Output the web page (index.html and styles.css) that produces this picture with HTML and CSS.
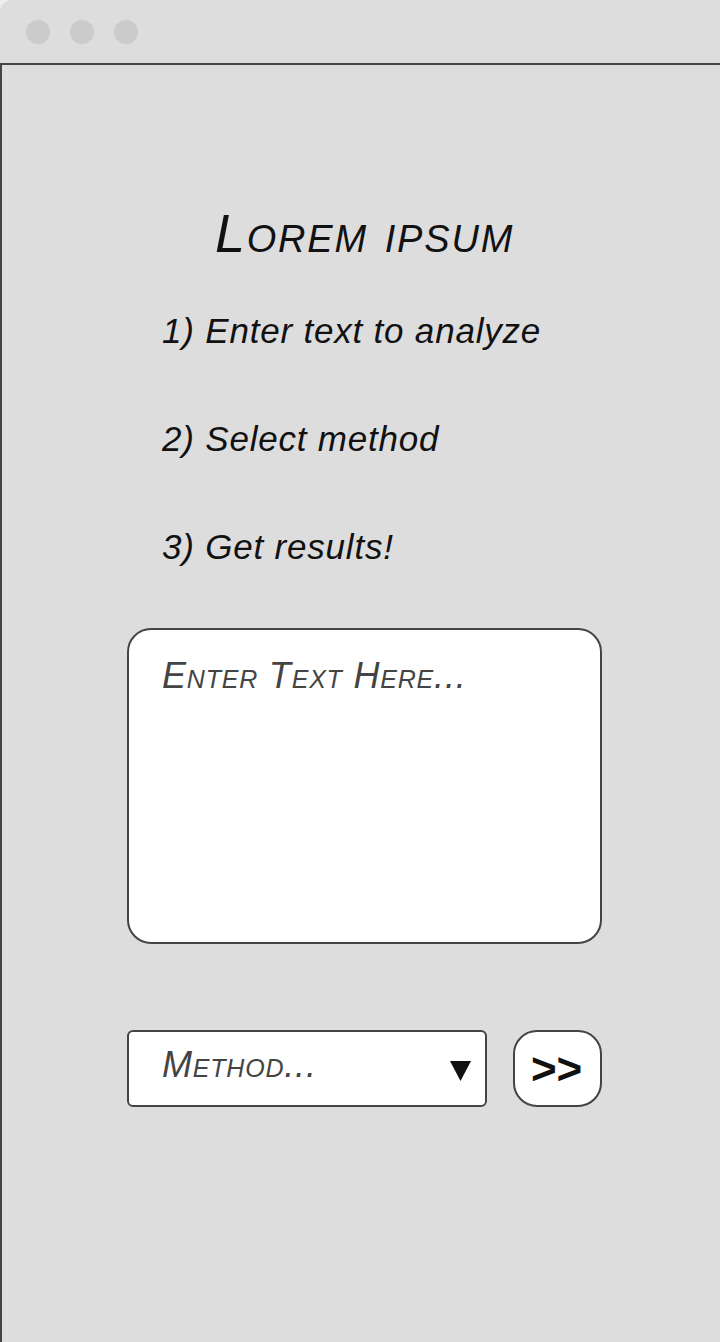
FILE: index.html
```html
<!DOCTYPE html>
<html lang="en">
<head>
<meta charset="utf-8">
<title>Lorem ipsum</title>
<link rel="stylesheet" href="styles.css">
</head>
<body>
<div class="window">
  <header class="titlebar">
    <span class="dot"></span>
    <span class="dot"></span>
    <span class="dot"></span>
  </header>
  <main class="frame">
    <div class="column">
      <h1 class="title">Lorem ipsum</h1>
      <ol class="steps">
        <li>1) Enter text to analyze</li>
        <li>2) Select method</li>
        <li>3) Get results!</li>
      </ol>
      <div class="textbox"><span class="placeholder">Enter Text Here...</span></div>
      <div class="controls">
        <div class="select">
          <span class="placeholder">Method...</span>
          <svg class="caret" width="21" height="20" viewBox="0 0 21 20"><polygon points="0,0 21,0 10.5,20" fill="#111"/></svg>
        </div>
        <button class="go">&gt;&gt;</button>
      </div>
    </div>
  </main>
</div>
</body>
</html>
```

FILE: styles.css
```css
html, body {
  margin: 0;
  padding: 0;
  background: #efefef;
  font-family: "Liberation Sans", Arial, sans-serif;
}

.window {
  width: 720px;
  height: 1342px;
  overflow: hidden;
  display: flex;
  flex-direction: column;
}

.titlebar {
  height: 63px;
  flex: none;
  background: #dddddd;
  border-top-left-radius: 12px;
  display: flex;
  align-items: center;
  gap: 20px;
  padding-left: 26px;
  box-sizing: border-box;
}

.dot {
  width: 24px;
  height: 24px;
  border-radius: 50%;
  background: #cbcbcb;
}

.frame {
  flex: 1;
  background: #dddddd;
  border-top: 2px solid #444;
  border-left: 2px solid #444;
  padding-left: 125px;
  padding-top: 136px;
}

.column {
  width: 475px;
  display: flex;
  flex-direction: column;
}

.title {
  margin: 0;
  font-size: 54px;
  line-height: 64px;
  letter-spacing: 1.8px;
  font-weight: normal;
  font-style: italic;
  font-variant: small-caps;
  color: #111;
  text-align: center;
}

.steps {
  list-style: none;
  margin: 44px 0 0 0;
  padding: 0 0 0 35px;
  display: flex;
  flex-direction: column;
  gap: 64px;
}

.steps li {
  font-size: 35px;
  line-height: 44px;
  letter-spacing: 0.8px;
  font-style: italic;
  color: #111;
}

.textbox {
  margin-top: 59px;
  height: 316px;
  box-sizing: border-box;
  background: #fff;
  border: 2px solid #444;
  border-radius: 24px;
  padding: 24px 0 0 33px;
}

.placeholder {
  font-size: 36px;
  line-height: 44px;
  letter-spacing: 0.8px;
  font-style: italic;
  font-variant: small-caps;
  color: #444;
}

.controls {
  margin-top: 86px;
  display: flex;
  gap: 26px;
}

.select {
  width: 361px;
  height: 77px;
  box-sizing: border-box;
  background: #fff;
  border: 2px solid #444;
  border-radius: 6px;
  display: flex;
  align-items: center;
  justify-content: space-between;
  padding: 0 14px 7px 33px;
}

.caret {
  display: block;
  margin-top: 11px;
}

.go {
  width: 89px;
  height: 77px;
  box-sizing: border-box;
  background: #fff;
  border: 2px solid #444;
  border-radius: 24px;
  font-family: "Liberation Sans", Arial, sans-serif;
  font-weight: bold;
  font-size: 44px;
  line-height: 1;
  color: #111;
  padding: 0 2px 0 0;
  display: flex;
  align-items: center;
  justify-content: center;
}
```
